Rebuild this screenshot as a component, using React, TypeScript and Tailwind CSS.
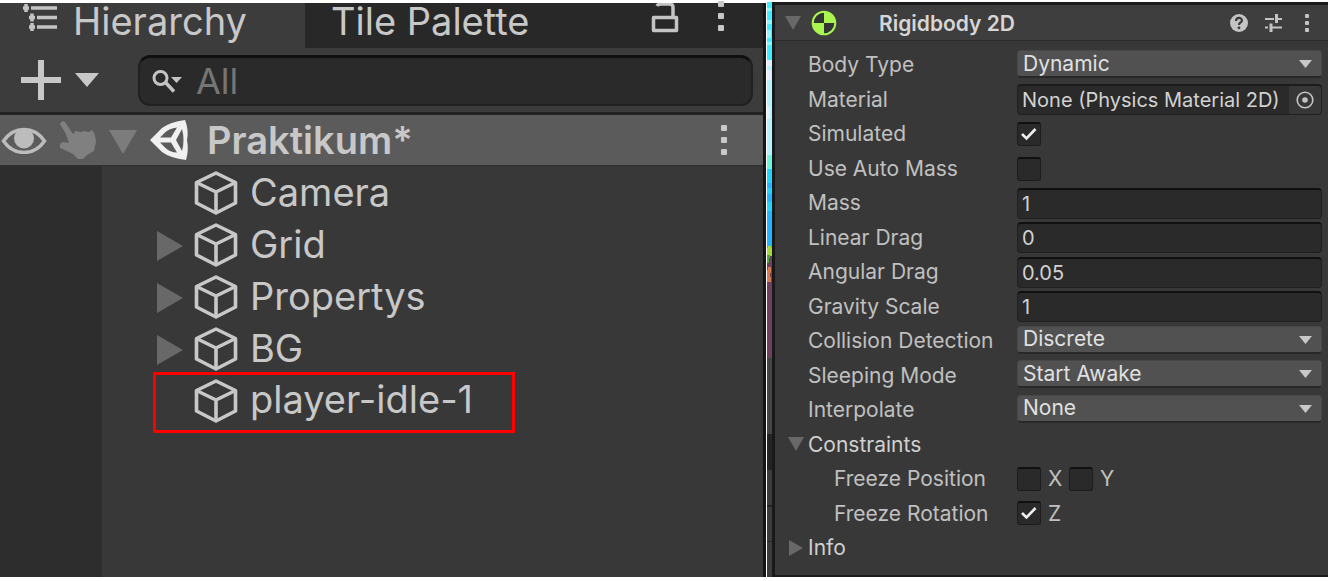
import { useState, type ReactNode } from "react";

const Dots = ({ className, gap = 12, r = 3 }: { className?: string; gap?: number; r?: number }) => (
  <svg width={r * 2 + 2} height={gap * 2 + r * 2} className={className} fill="currentColor" aria-hidden="true">
    {[0, 1, 2].map((i) => (
      <rect key={i} x="1" y={i * gap} width={r * 2} height={r * 2} rx={1} />
    ))}
  </svg>
);

const DownTriangle = ({ className }: { className?: string }) => (
  <svg viewBox="0 0 16 14" preserveAspectRatio="none" className={className} fill="currentColor" aria-hidden="true">
    <path d="M0 0h16L8 14z" />
  </svg>
);

const RightTriangle = ({ className }: { className?: string }) => (
  <svg viewBox="0 0 14 16" preserveAspectRatio="none" className={className} fill="currentColor" aria-hidden="true">
    <path d="M0 0v16l14-8z" />
  </svg>
);

const Cube = () => (
  <svg viewBox="0 0 44 46" className="h-[46px] w-11 shrink-0" fill="none" stroke="#c8c8c8" strokeWidth="3.6" strokeLinejoin="round" aria-hidden="true">
    <path d="M22 4 41.500 13.500V34L22 44 2.500 34V13.500z" />
    <path d="M2.500 13.500 22 23l19.500-9.500M22 23v21" />
  </svg>
);

const Eye = () => (
  <svg viewBox="0 0 46 28" className="h-7 w-[46px]" aria-hidden="true">
    <path d="M2.500 15C8 7 15 3.500 23 3.500S38 7 43.500 15C38 23 31 26.500 23 26.500S8 23 2.500 15z" fill="none" stroke="#bcbcbc" strokeWidth="3.4" />
    <circle cx="23" cy="12.500" r="10" fill="#bcbcbc" />
  </svg>
);

const Hand = () => (
  <svg viewBox="0 0 38 40" className="h-10 w-[38px]" fill="#808080" aria-hidden="true">
    <path d="M1 4Q3 0 6 2L14 14l3-3 5 1 3-1 5 1 3-2 3 5 1 7-2 9-7 4-4 4h-5l-5-5-6-3-7-3q-1-5 3-6l6 1-3-9z" />
  </svg>
);

const UnityMark = () => (
  <svg viewBox="0 0 40 42" className="h-[42px] w-10" aria-hidden="true">
    <path
      d="M1 21 13 9q8-6 23-8 4 10 2 20 2 10-1 20-16-2-24-8zM11 18.500h11l6-10q-8 1-12 5zM11 23.500l5 5q5 5 12 5l-6-10zM33 10l-6 11 6 11q3-11 0-22z"
      fill="#f0f0f0"
      fillRule="evenodd"
    />
  </svg>
);

const HierarchyIcon = () => (
  <svg viewBox="0 0 36 30" className="h-[30px] w-9" stroke="#c4c4c4" strokeWidth="3.500" aria-hidden="true">
    <path d="M0 5h6M8 5h26M6 14.500h6M14 14.500h20M6 24h6M14 24h20M3 1v8M9 10.500v8M9 20v8" />
  </svg>
);

const OpenLock = () => (
  <svg viewBox="0 0 28 30" className="h-[30px] w-7" fill="none" stroke="#c4c4c4" strokeWidth="3.500" strokeLinejoin="round" aria-hidden="true">
    <path d="M2.500 14.500h23v13h-23zM22 14.500V4q0-3-4-3h-8q-3 0-4 2" />
  </svg>
);

const SearchIcon = () => (
  <svg viewBox="0 0 30 24" className="h-6 w-[30px] shrink-0" fill="none" stroke="#c4c4c4" strokeWidth="3" aria-hidden="true">
    <circle cx="8.500" cy="9" r="6.500" />
    <path d="m13.500 13.500 8.500 9" strokeWidth="3.500" />
    <path d="M19 8h11l-5.500 6z" fill="#c4c4c4" stroke="none" />
  </svg>
);

const RigidbodyIcon = () => (
  <svg viewBox="0 0 26 26" className="size-[26px]" aria-hidden="true">
    <circle cx="13" cy="13" r="11.300" fill="#343434" stroke="#a8f64e" strokeWidth="2" />
    <path d="M13 13V1.500A11.500 11.500 0 0 1 24.500 13zM13 13v11.500A11.500 11.500 0 0 1 1.500 13z" fill="#a8f64e" />
  </svg>
);

const Help = () => (
  <svg viewBox="0 0 18 18" className="size-[18px]" aria-hidden="true">
    <circle cx="9" cy="9" r="9" fill="#c4c4c4" />
    <path d="M6 7c0-4 6-4 6-.5 0 2-3 2-3 4.500" fill="none" stroke="#3c3c3c" strokeWidth="2.200" />
    <circle cx="9" cy="13.800" r="1.400" fill="#3c3c3c" />
  </svg>
);

const Preset = () => (
  <svg viewBox="0 0 18 18" className="size-[18px]" stroke="#c4c4c4" strokeWidth="2" aria-hidden="true">
    <path d="M1 5h9M12 5h6M1 13.500h3M6 13.500h12" />
    <path d="M12.500 0v9M7 9.500v9" strokeWidth="3" />
  </svg>
);

const nodes = [
  { name: "Camera", parent: false },
  { name: "Grid", parent: true },
  { name: "Propertys", parent: true },
  { name: "BG", parent: true },
];

function Hierarchy() {
  return (
    <section aria-label="Hierarchy" className="flex min-w-0 flex-col border-r-[3px] border-[#151515] bg-[#383838] text-[38px] text-[#c8c8c8]">
      <div role="tablist" className="flex h-[45px] items-start bg-[#282828]">
        <button role="tab" aria-selected="true" className="flex h-full w-[305px] items-start gap-3.5 bg-[#3c3c3c] pl-[23px]">
          <HierarchyIcon />
          <span className="-mt-1 leading-[44px]">Hierarchy</span>
        </button>
        <button role="tab" aria-selected="false" className="-mt-1 pl-[26px] leading-[44px]">Tile Palette</button>
        <button aria-label="Lock" className="ml-auto"><OpenLock /></button>
        <button aria-label="Tab menu" className="-mt-0.5 ml-[38px] mr-[38px]"><Dots /></button>
      </div>
      <div className="flex h-[67px] items-center border-b-[3px] border-[#222222] bg-[#3c3c3c] pr-2.5">
        <button aria-label="Create" className="flex w-[138px] items-center gap-3.5 pl-[21px]">
          <svg viewBox="0 0 40 40" className="size-10" stroke="#c8c8c8" strokeWidth="6" aria-hidden="true"><path d="M20 0v40M0 20h40" /></svg>
          <DownTriangle className="h-3.5 w-6" />
        </button>
        <label className="flex h-[51px] min-w-0 flex-1 items-center gap-3.5 rounded-xl border-2 border-t-[3px] border-[#202020] border-t-[#101010] bg-[#2a2a2a] pl-3">
          <SearchIcon />
          <input aria-label="Search" placeholder="All" className="min-w-0 flex-1 bg-transparent text-[36px] outline-none placeholder:text-[#757575]" />
        </label>
      </div>
      <div className="flex h-[50px] items-center bg-[#5b5b5b] font-semibold">
        <button aria-label="Toggle visibility" className="pl-px"><Eye /></button>
        <button aria-label="Toggle picking" className="pl-3"><Hand /></button>
        <button aria-label="Collapse Praktikum" className="pl-3 pt-1 text-[#7c7c7c]"><DownTriangle className="h-6 w-7" /></button>
        <span className="pl-3"><UnityMark /></span>
        <span className="pl-[18px]">Praktikum*</span>
        <button aria-label="Scene menu" className="ml-auto mr-[35px]"><Dots /></button>
      </div>
      <div className="flex flex-1 border-t border-[#303030]">
        <div className="w-[102px] bg-[#2d2d2d]" />
        <ul className="flex-1">
          {nodes.map((n) => (
            <li key={n.name} className="flex h-[52px] items-center pl-[55px]">
              <button aria-label={`Expand ${n.name}`} className={n.parent ? "w-[37px] pt-1 text-[#686868]" : "invisible w-[37px]"}>
                <RightTriangle className="h-[30px] w-[26px]" />
              </button>
              <Cube />
              <span className="pl-3">{n.name}</span>
            </li>
          ))}
          <li className="-mt-0.5 flex">
            <div className="ml-[51px] flex h-[61px] w-[362px] items-center border-[3px] border-[#ff0000] pb-1.5 pl-[38px]">
              <Cube />
              <span className="pl-3">player-idle-1</span>
            </div>
          </li>
        </ul>
      </div>
    </section>
  );
}

function GameSliver() {
  return (
    <svg viewBox="0 0 5 575" preserveAspectRatio="none" className="h-full w-[5px] shrink-0" aria-hidden="true">
      <path fill="#40ecff" d="M0 0h5v58H0z" />
      <path fill="#8ef6ff" d="M0 6h5v3H0zM0 18h5v4H0zM0 28h4v8H0zM0 40h5v3H0z" />
      <path fill="#b8f2ff" d="M0 58h5v95H0z" />
      <path fill="#e2f0ff" d="M0 58h5v6H0zM0 68h4v10H0zM0 105h3v12H0z" />
      <path fill="#6cf5d8" d="M0 153h5v14H0z" />
      <path fill="#20d4fa" d="M0 167h5v42H0z" />
      <path fill="#25b4ff" d="M0 181h5v5H0zM0 192h5v8H0zM0 209h5v38H0z" />
      <path fill="#6e405c" d="M0 247h5v109H0z" />
      <path fill="#a4d83d" d="M1 244h3v2h1v8H2v4H0V246h1z" />
      <path fill="#3fae35" d="M0 253h3v3H2v5H0z" />
      <path fill="#d77a52" d="M1 265h3v6H3v4h1v5H0V268h1z" />
      <path fill="#444444" d="M0 356h5v76H0z" />
      <path fill="#242424" d="M0 432h5v36H0z" />
      <path fill="#3c3c3c" d="M0 468h5v107H0z" />
      <path fill="#242424" d="M0 503h5v2H0zM0 539h5v1H0z" />
    </svg>
  );
}

function Row({ label, id, indent, children }: { label: string; id?: string; indent?: boolean; children: ReactNode }) {
  return (
    <div className="flex items-center pr-1.5">
      <label htmlFor={id} className={indent ? "w-[242px] shrink-0 pl-[59px]" : "w-[242px] shrink-0 pl-[33px]"}>{label}</label>
      {children}
    </div>
  );
}

function Check({ id, on }: { id: string; on?: boolean }) {
  return (
    <span className="relative flex size-6 shrink-0">
      <input id={id} type="checkbox" defaultChecked={on} className="peer size-6 appearance-none rounded-[3px] border border-t-2 border-[#1c1c1c] border-t-[#101010] bg-[#2a2a2a]" />
      <svg viewBox="0 0 24 24" className="pointer-events-none absolute inset-0 hidden size-6 peer-checked:block" fill="none" stroke="#eeeeee" strokeWidth="2.600" aria-hidden="true">
        <path d="m5 12 4.500 4.500L18.500 7" />
      </svg>
    </span>
  );
}

function Pick({ label, id, value, others }: { label: string; id: string; value: string; others: string[] }) {
  return (
    <Row label={label} id={id}>
      <div className="relative flex min-w-0 flex-1 pb-0.5">
        <select id={id} defaultValue={value} className="h-7 w-full appearance-none rounded border border-b-2 border-[#484848] border-b-[#282828] bg-[#515151] pl-[5px] leading-[24px] text-[#e0e0e0]">
          <option>{value}</option>
          {others.map((o) => <option key={o}>{o}</option>)}
        </select>
        <DownTriangle className="pointer-events-none absolute right-2.5 top-2.5 h-2 w-[13px] text-[#c8c8c8]" />
      </div>
    </Row>
  );
}

function Field({ label, id, value }: { label: string; id: string; value: string }) {
  const [v, setV] = useState(value);
  return (
    <Row label={label} id={id}>
      <input id={id} value={v} onChange={(e) => setV(e.target.value)} className="h-[31px] min-w-0 flex-1 rounded border border-t-2 border-[#202020] border-t-[#101010] bg-[#2a2a2a] pl-1 text-[20px] text-[#d2d2d2]" />
    </Row>
  );
}

function Inspector() {
  return (
    <section aria-label="Inspector" className="flex min-w-0 flex-1 flex-col border-l-[3px] border-[#191919] bg-[#383838] text-[21px] text-[#c0c0c0]">
      <header className="flex h-[39px] shrink-0 items-center border-b border-t-[3px] border-[#2c2c2c] border-t-[#1c1c1c] bg-[#3e3e3e] pl-2.5">
        <button aria-label="Collapse Rigidbody 2D" className="text-[#686868]"><DownTriangle className="h-3.5 w-4" /></button>
        <span className="pl-2.5"><RigidbodyIcon /></span>
        <h2 className="pl-[42px] pt-0.5 font-semibold text-[#d6d6d6]">Rigidbody 2D</h2>
        <button aria-label="Help" className="ml-auto"><Help /></button>
        <button aria-label="Presets" className="ml-4"><Preset /></button>
        <button aria-label="Component menu" className="ml-[22px] mr-[18px] text-[#c4c4c4]"><Dots gap={7} r={2} /></button>
      </header>
      <div className="grid flex-1 auto-rows-fr grid-cols-1 border-b-2 border-[#1c1c1c] pb-2.5 pt-[7px]">
        <Pick label="Body Type" id="body" value="Dynamic" others={["Kinematic", "Static"]} />
        <Row label="Material" id="material">
          <div className="flex h-[31px] min-w-0 flex-1 items-center rounded border border-t-2 border-[#202020] border-t-[#1c1c1c] bg-[#2a2a2a]">
            <input id="material" readOnly value="None (Physics Material 2D)" className="min-w-0 flex-1 pl-1 text-[20px] text-[#d2d2d2]" />
            <button aria-label="Select material" className="flex h-full w-8 shrink-0 items-center justify-center rounded-r bg-[#373737]">
              <svg viewBox="0 0 18 18" className="size-[18px]" aria-hidden="true">
                <circle cx="9" cy="9" r="7.800" fill="none" stroke="#c4c4c4" strokeWidth="1.600" />
                <circle cx="9" cy="9" r="2.800" fill="#c4c4c4" />
              </svg>
            </button>
          </div>
        </Row>
        <Row label="Simulated" id="simulated"><Check id="simulated" on /></Row>
        <Row label="Use Auto Mass" id="automass"><Check id="automass" /></Row>
        <Field label="Mass" id="mass" value="1" />
        <Field label="Linear Drag" id="linear" value="0" />
        <Field label="Angular Drag" id="angular" value="0.05" />
        <Field label="Gravity Scale" id="gravity" value="1" />
        <Pick label="Collision Detection" id="collision" value="Discrete" others={["Continuous"]} />
        <Pick label="Sleeping Mode" id="sleeping" value="Start Awake" others={["Never Sleep", "Start Asleep"]} />
        <Pick label="Interpolate" id="interpolate" value="None" others={["Interpolate", "Extrapolate"]} />
        <button aria-expanded="true" className="flex items-center gap-1 pl-[13px] text-[#d0d0d0]">
          <DownTriangle className="h-3.5 w-4 text-[#686868]" />Constraints
        </button>
        <Row label="Freeze Position" indent>
          <Check id="px" /><label htmlFor="px" className="w-7 pl-[7px]">X</label>
          <Check id="py" /><label htmlFor="py" className="pl-[7px]">Y</label>
        </Row>
        <Row label="Freeze Rotation" indent>
          <Check id="rz" on /><label htmlFor="rz" className="pl-[7px]">Z</label>
        </Row>
        <button aria-expanded="false" className="flex items-center gap-[5px] pl-3.5 text-[#d0d0d0]">
          <RightTriangle className="h-4 w-3.5 text-[#686868]" />Info
        </button>
      </div>
    </section>
  );
}

export default function App() {
  return (
    <main className="grid min-h-screen grid-cols-[766fr_562fr] bg-white pb-1 font-['Inter',sans-serif]">
      <div className="grid pt-[3px]"><Hierarchy /></div>
      <div className="flex min-w-0 pl-px pt-0.5"><GameSliver /><Inspector /></div>
    </main>
  );
}
